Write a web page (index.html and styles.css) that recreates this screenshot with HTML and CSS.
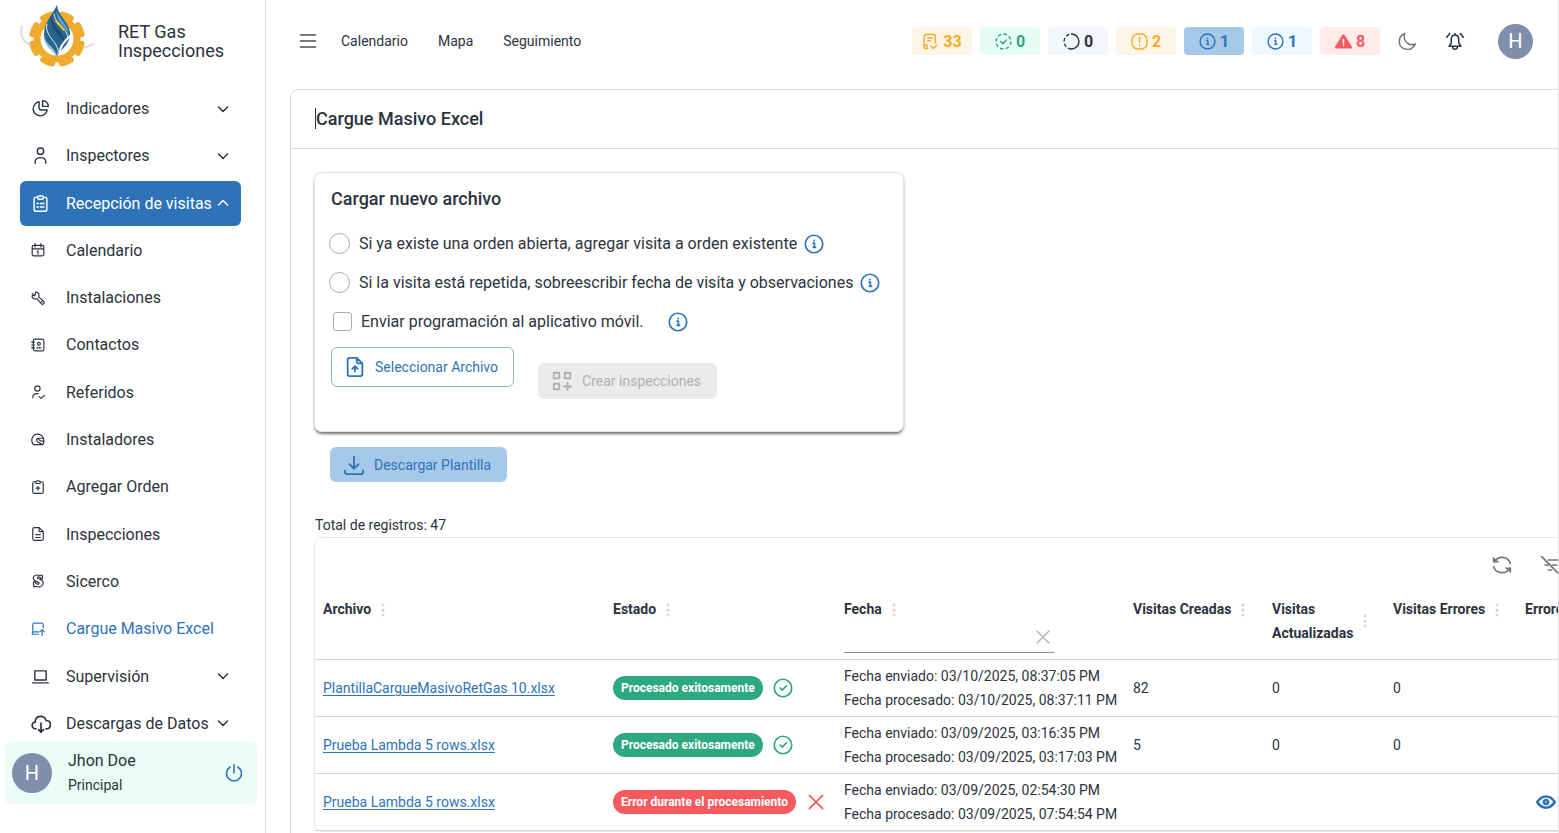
FILE: index.html
```html
<!DOCTYPE html>
<html lang="es">
<head>
    <meta charset="utf-8">
    <title>Cargue Masivo Excel</title>
    <link rel="stylesheet" href="styles.css">
</head>
<body>

    <!-- shared icons -->
    <svg class="sprite" aria-hidden="true">
        <symbol id="down" viewBox="0 0 24 24"><path d="M3 8l9 9 9-9"/></symbol>
        <symbol id="up" viewBox="0 0 24 24"><path d="M3 16l9-9 9 9"/></symbol>
        <symbol id="info" viewBox="0 0 24 24"><circle cx="12" cy="12" r="10.5"/><path d="M11 11h1.500v5M11 16h3M12 7.500v.5"/></symbol>
        <symbol id="check" viewBox="0 0 24 24"><circle cx="12" cy="12" r="10.500"/><path d="M8.500 12l2.500 2.500 5-5"/></symbol>
        <symbol id="dots" viewBox="0 0 6 16"><circle cx="3" cy="3" r="1.500"/><circle cx="3" cy="8" r="1.500"/><circle cx="3" cy="13" r="1.500"/></symbol>
        <symbol id="cross" viewBox="0 0 24 24"><path d="M4 4l16 16M20 4L4 20"/></symbol>
    </svg>

    <div class="app">
        <aside class="sidebar">
            <div class="brand">
                <svg class="logo" viewBox="0 0 76 72">
                    <path d="M2 24c-4 12 5 20 15 20M73 42c-4 3-8 4-14 4" fill="none" stroke="#dcdde4" stroke-width="2"/>
                    <circle cx="37" cy="37" r="20" fill="#fff" stroke="#efab2e" stroke-width="7"/>
                    <circle cx="37" cy="37" r="25" fill="none" stroke="#efab2e" stroke-width="6" pathLength="16" stroke-dasharray="1 1" stroke-dashoffset="-0.5"/>
                    <path d="M37 3C33 12 24 20 24 32c0 11 8 15 13 22 4-7 14-12 13-24C49 20 38 14 37 3z" fill="#28658c"/>
                    <path d="M37 3c-3 12 12 17 12 30-3-8-15-13-12-30z" fill="#5ba6c5"/>
                    <path d="M32 14c-1 10 12 16 13 27-4-8-17-15-13-27z" fill="#164870"/>
                    <path d="M34 12c0 9 14 14 14 25M27 22c-4 12 14 19 11 30" fill="none" stroke="#dceef5" stroke-width="1"/>
                    <path d="M24 31c0 12 11 13 13 23-5-6-15-11-13-23z" fill="#8fc5d8"/>
                    <path d="M50 34c-7 7-11 12-10 18" fill="none" stroke="#fff" stroke-width="2"/>
                    <path d="M36 19l8 9" stroke="#efc03c"/>
                </svg>
                <span>RET Gas<br>Inspecciones</span>
            </div>

            <nav class="menu">
                <a href="#"><svg class="icon" viewBox="0 0 24 24"><path d="M10 2.500A10 10 0 1 0 21.500 14H13a3 3 0 0 1-3-3zM15 1v8h8A8 8 0 0 0 15 1z"/></svg><span>Indicadores</span><svg class="arrow"><use href="#down"/></svg></a>
                <a href="#"><svg class="icon" viewBox="0 0 24 24"><circle cx="12" cy="6" r="4.500"/><path d="M4.500 23v-2c0-8 15-8 15 0v2"/></svg><span>Inspectores</span><svg class="arrow"><use href="#down"/></svg></a>
                <a href="#" class="active"><svg class="icon" viewBox="0 0 24 24"><path d="M8 3H6a3 3 0 0 0-3 3v14a3 3 0 0 0 3 3h12a3 3 0 0 0 3-3V6a3 3 0 0 0-3-3h-2M8 2l4-1 4 1v3l-2 1h-4L8 5zM7 12h2M12 12h5M7 17h2M12 17h5"/></svg><span>Recepción de visitas</span><svg class="arrow"><use href="#up"/></svg></a>
                <a href="#" class="sub"><svg class="icon" viewBox="0 0 24 24"><path d="M5 4h14a3 3 0 0 1 3 3v12a3 3 0 0 1-3 3H5a3 3 0 0 1-3-3V7a3 3 0 0 1 3-3zM7 1v6M17 1v6M2 10h20M11 14h1v5"/></svg><span>Calendario</span></a>
                <a href="#" class="sub"><svg class="icon" viewBox="0 0 24 24"><path d="M8 2L7 7l-5 1c-1 4 4 7 8 5l8 9c2 2 6-1 4-4l-9-8c2-4-1-9-5-8zM2 4l4 4M18 18l1 1"/></svg><span>Instalaciones</span></a>
                <a href="#" class="sub"><svg class="icon" viewBox="0 0 24 24"><path d="M7 2h12a3 3 0 0 1 3 3v14a3 3 0 0 1-3 3H7a3 3 0 0 1-3-3V5a3 3 0 0 1 3-3zM1 7h5M1 12h5M1 17h5M10 17h7"/><circle cx="13.500" cy="10" r="2.500"/></svg><span>Contactos</span></a>
                <a href="#" class="sub"><svg class="icon" viewBox="0 0 24 24"><circle cx="11" cy="6" r="4.500"/><path d="M3 22c0-6 4-8 10-7M14 20l3 3 6-5"/></svg><span>Referidos</span></a>
                <a href="#" class="sub"><svg class="icon" viewBox="0 0 24 24"><path d="M4 20h16c6-9-1-18-9-18S-2 12 4 20zM20 9h-7c-5 0-4 6 0 7l7 4M12 10l5 4h5"/></svg><span>Instaladores</span></a>
                <a href="#" class="sub"><svg class="icon" viewBox="0 0 24 24"><path d="M8 3H6a3 3 0 0 0-3 3v14a3 3 0 0 0 3 3h12a3 3 0 0 0 3-3V6a3 3 0 0 0-3-3h-2M8 3l4-2 4 2v2l-2 1h-4L8 5zM12 11v6M9 14h6"/></svg><span>Agregar Orden</span></a>
                <a href="#" class="sub"><svg class="icon" viewBox="0 0 24 24"><path d="M14 1H6a3 3 0 0 0-3 3v16a3 3 0 0 0 3 3h12a3 3 0 0 0 3-3V8zM14 1v7h7M8 13h8M8 18h8"/></svg><span>Inspecciones</span></a>
                <a href="#" class="sub"><svg class="icon" viewBox="0 0 24 24"><path d="M20 8l-1-6-3 1C9 0 3 3 4 8c1 6 11 5 10 8-1 3-6 1-7-2H4l1 8 3-1c6 3 13 0 13-6 0-7-11-6-10-9 1-2 5-1 6 2z"/></svg><span>Sicerco</span></a>
                <a href="#" class="sub current"><svg class="icon" viewBox="0 0 24 24"><path d="M3 17V4l2-2h14l2 2v6M3 17l-1 4h11M3 17h10M19 23v-9M15 17l4-4 4 4"/></svg><span>Cargue Masivo Excel</span></a>
                <a href="#"><svg class="icon" viewBox="0 0 24 24"><path d="M4 4h16v13H4zM1 21h22"/></svg><span>Supervisión</span><svg class="arrow"><use href="#down"/></svg></a>
                <a href="#"><svg class="icon large" viewBox="0 0 24 24"><path d="M6 19C0 19 0 11 5 11 5 2 17 2 18 9c7 0 7 10 0 10M12 12v11M9 20l3 3 3-3"/></svg><span>Descargas de Datos</span><svg class="arrow"><use href="#down"/></svg></a>
            </nav>

            <div class="user">
                <span class="avatar big">H</span>
                <div class="user-name">Jhon Doe<small>Principal</small></div>
                <button class="icon-btn power" aria-label="Salir"><svg viewBox="0 0 24 24"><path d="M12 1v11M7 4a10 10 0 1 0 10 0"/></svg></button>
            </div>
        </aside>

        <main class="main">
            <header class="topbar">
                <button class="icon-btn burger" aria-label="Menú"><svg viewBox="0 0 24 24"><path d="M2 4h20M2 12h20M2 20h20"/></svg></button>
                <a href="#">Calendario</a>
                <a href="#">Mapa</a>
                <a href="#">Seguimiento</a>

                <div class="chips">
                    <span class="chip orange"><svg viewBox="0 0 24 24"><path d="M8 22H5a2 2 0 0 1-2-2V5a3 3 0 0 1 3-3h10a3 3 0 0 1 3 3v9M3 17h4v5M8 7h7M8 11h4M13 19l3 3 5-5"/></svg>33</span>
                    <span class="chip green"><svg viewBox="0 0 24 24"><circle class="dashed" cx="12" cy="12" r="10.500" pathLength="32" stroke-dasharray="2.500 1.500"/><path d="M8 12l3 3 5-5"/></svg>0</span>
                    <span class="chip gray"><svg viewBox="0 0 24 24"><path d="M12 1.500a10.500 10.500 0 0 1 0 21"/><path class="dashed" d="M12 22.500a10.500 10.500 0 0 1 0-21" pathLength="16" stroke-dasharray="2.500 1.500"/></svg>0</span>
                    <span class="chip orange"><svg viewBox="0 0 24 24"><rect x="1.500" y="1.500" width="21" height="21" rx="8"/><path d="M12 6v7M12 17v.5"/></svg>2</span>
                    <span class="chip blue"><svg><use href="#info"/></svg>1</span>
                    <span class="chip sky"><svg><use href="#info"/></svg>1</span>
                    <span class="chip red"><svg viewBox="0 0 24 24"><path d="M12 4L2 20h20z" fill="#f65a5e" stroke="#f65a5e" stroke-width="4"/><path d="M12 9v5M12 17v.5" stroke="#fff"/></svg>8</span>
                </div>
                <button class="icon-btn moon" aria-label="Tema"><svg viewBox="0 0 24 24"><path d="M9 2C-1 6-1 21 11 23c5 1 10-2 12-7-9 4-17-5-14-14z"/></svg></button>
                <button class="icon-btn bell" aria-label="Notificaciones"><svg viewBox="0 0 24 24"><path d="M4 19h16l-3-4v-5c0-8-10-8-10 0v5zM9 20c0 4 6 4 6 0M12 4V2M1 7l4-5M23 7l-4-5"/></svg></button>
                <span class="avatar">H</span>
            </header>

            <section class="page-card">
                <h1><span class="caret">Cargue Masivo Excel</span></h1>

                <div class="page-body">
                    <form class="upload" onsubmit="return false;">
                        <h2>Cargar nuevo archivo</h2>
                        <div class="option">
                            <input type="radio" name="modo" id="agregar">
                            <label for="agregar">Si ya existe una orden abierta, agregar visita a orden existente</label>
                            <svg class="info"><use href="#info"/></svg>
                        </div>
                        <div class="option">
                            <input type="radio" name="modo" id="sobreescribir">
                            <label for="sobreescribir">Si la visita está repetida, sobreescribir fecha de visita y observaciones</label>
                            <svg class="info"><use href="#info"/></svg>
                        </div>
                        <div class="option">
                            <input type="checkbox" id="enviar">
                            <label for="enviar">Enviar programación al aplicativo móvil.</label>
                            <svg class="info far"><use href="#info"/></svg>
                        </div>
                        <div class="actions">
                            <button class="btn outline" type="button"><svg viewBox="0 0 24 24"><path d="M14 2H6a2 2 0 0 0-2 2v16a2 2 0 0 0 2 2h12a2 2 0 0 0 2-2V8zM14 2v4a2 2 0 0 0 2 2h4M12 17v-6M9 14l3-3 3 3"/></svg>Seleccionar Archivo</button>
                            <button class="btn" type="submit" disabled><svg viewBox="0 0 24 24"><path d="M3 3h6v6H3zM15 3h6v6h-6zM3 15h6v6H3zM18 14v8M14 18h8"/></svg>Crear inspecciones</button>
                        </div>
                    </form>

                    <button class="btn download"><svg viewBox="0 0 24 24"><path d="M12 3v13M7 11l5 5 5-5M2 18v1a3 3 0 0 0 3 3h14a3 3 0 0 0 3-3v-1"/></svg>Descargar Plantilla</button>

                    <p class="total">Total de registros: 47</p>

                    <div class="table-box">
                        <div class="toolbar">
                            <button class="icon-btn" aria-label="Recargar"><svg viewBox="0 0 24 24"><path d="M3 8A10.500 10.500 0 0 1 22 10M21 16A10.500 10.500 0 0 1 2 14"/><path d="M1 2v7h8zM23 22v-7h-8z" fill="#757575" stroke="none"/></svg></button>
                            <button class="icon-btn" aria-label="Ocultar filtros"><svg viewBox="0 0 24 24"><path d="M2 2l20 20M10 6h13M6 12h4M15 12h5M10 18h4"/></svg></button>
                        </div>
                        <table>
                            <colgroup>
                                <col class="c-file"><col class="c-state"><col class="c-date"><col class="c-created"><col class="c-updated"><col class="c-errors"><col class="c-view">
                            </colgroup>
                            <thead>
                                <tr>
                                    <th>Archivo<svg class="dots"><use href="#dots"/></svg></th>
                                    <th>Estado<svg class="dots"><use href="#dots"/></svg></th>
                                    <th>
                                        <label for="fecha">Fecha</label><svg class="dots"><use href="#dots"/></svg>
                                        <div class="filter">
                                            <input type="text" id="fecha">
                                            <button class="icon-btn" aria-label="Limpiar"><svg><use href="#cross"/></svg></button>
                                        </div>
                                    </th>
                                    <th>Visitas Creadas<svg class="dots"><use href="#dots"/></svg></th>
                                    <th><div class="two-lines"><span>Visitas<br>Actualizadas</span><svg class="dots"><use href="#dots"/></svg></div></th>
                                    <th>Visitas Errores<svg class="dots"><use href="#dots"/></svg></th>
                                    <th>Errores</th>
                                </tr>
                            </thead>
                            <tbody>
                                <tr>
                                    <td><a href="#">PlantillaCargueMasivoRetGas 10.xlsx</a></td>
                                    <td><div class="state"><span class="badge ok">Procesado exitosamente</span><svg class="ok-icon"><use href="#check"/></svg></div></td>
                                    <td>Fecha enviado: 03/10/2025, 08:37:05 PM<br>Fecha procesado: 03/10/2025, 08:37:11 PM</td>
                                    <td>82</td>
                                    <td>0</td>
                                    <td>0</td>
                                    <td></td>
                                </tr>
                                <tr>
                                    <td><a href="#">Prueba Lambda 5 rows.xlsx</a></td>
                                    <td><div class="state"><span class="badge ok">Procesado exitosamente</span><svg class="ok-icon"><use href="#check"/></svg></div></td>
                                    <td>Fecha enviado: 03/09/2025, 03:16:35 PM<br>Fecha procesado: 03/09/2025, 03:17:03 PM</td>
                                    <td>5</td>
                                    <td>0</td>
                                    <td>0</td>
                                    <td></td>
                                </tr>
                                <tr>
                                    <td><a href="#">Prueba Lambda 5 rows.xlsx</a></td>
                                    <td><div class="state"><span class="badge error">Error durante el procesamiento</span><svg class="error-icon"><use href="#cross"/></svg></div></td>
                                    <td>Fecha enviado: 03/09/2025, 02:54:30 PM<br>Fecha procesado: 03/09/2025, 07:54:54 PM</td>
                                    <td></td>
                                    <td></td>
                                    <td></td>
                                    <td><button class="icon-btn eye" aria-label="Ver errores"><svg viewBox="0 0 24 24"><path d="M1.500 12C7 3 17 3 22.500 12 17 21 7 21 1.500 12z"/><circle cx="12" cy="12" r="2.500"/></svg></button></td>
                                </tr>
                            </tbody>
                        </table>
                    </div>
                </div>
            </section>
        </main>
    </div>

</body>
</html>
```
FILE: styles.css
```css
* {
    box-sizing: border-box;
}

body {
    margin: 0;
    font-family: Roboto, "Liberation Sans", sans-serif;
    font-size: 16px;
    color: #2c333e;
    background-color: #fff;
}

a {
    color: inherit;
    text-decoration: none;
}

button {
    font-family: inherit;
    cursor: pointer;
}

svg {
    flex-shrink: 0;
    fill: none;
    stroke: currentColor;
    stroke-width: 2;
    stroke-linecap: round;
    stroke-linejoin: round;
}

.sprite {
    display: none;
}

.app {
    display: flex;
    height: 100vh;
    overflow: hidden;
}

/* sidebar */
.sidebar {
    width: 266px;
    flex-shrink: 0;
    display: flex;
    flex-direction: column;
    border-right: 1px solid #d9dbde;
    padding-bottom: 29px;
}

.brand {
    display: flex;
    align-items: center;
    gap: 22px;
    height: 86px;
    padding: 0 0 4px 20px;
    font-size: 18px;
    line-height: 19px;
}

.logo {
    width: 76px;
    height: 72px;
    margin-top: -6px;
    stroke: none;
}

.menu {
    flex: 1;
    display: flex;
    flex-direction: column;
    justify-content: space-between;
    padding: 0 24px 0 20px;
}

.menu a {
    display: flex;
    align-items: center;
    height: 45px;
    padding: 0 12px;
    border-radius: 6px;
    white-space: nowrap;
}

.menu span {
    flex: 1;
}

.menu .active {
    background-color: #2e73b9;
    color: #fff;
}

.menu .current {
    color: #2e73b9;
}

.icon {
    width: 17px;
    height: 17px;
    margin-right: 17px;
}

.icon.large {
    width: 20px;
    height: 20px;
    margin: 0 15px 0 -1px;
}

.sub .icon {
    width: 14px;
    height: 14px;
    margin: 0 21px 0 -1px;
}

.arrow {
    width: 12px;
    height: 12px;
    stroke-width: 3;
}

.user {
    display: flex;
    align-items: center;
    height: 62px;
    margin: -4px 8px 0 5px;
    padding: 0 14px 0 7px;
    border-radius: 6px;
    background-color: #ebfbf6;
    z-index: 1;
}

.user-name {
    flex: 1;
    margin-left: 16px;
    line-height: 24px;
}

.user-name small {
    display: block;
    font-size: 14px;
}

.avatar {
    display: flex;
    align-items: center;
    justify-content: center;
    width: 35px;
    height: 35px;
    border-radius: 50%;
    background-color: #7e8eab;
    color: #fff;
    font-size: 20px;
}

.avatar.big {
    width: 40px;
    height: 40px;
}

.icon-btn {
    display: flex;
    padding: 0;
    border: none;
    background: none;
    color: #757575;
}

.icon-btn svg {
    width: 18px;
    height: 18px;
}

.power {
    color: #2e73b9;
}

/* main area */
.main {
    flex: 1;
    min-width: 0;
    overflow: hidden;
    padding-left: 24px;
    border-right: 1px solid #e2e3e5;
}

.topbar {
    display: flex;
    align-items: center;
    gap: 30px;
    height: 89px;
    padding: 0 25px 7px 9px;
    font-size: 14px;
}

.burger {
    margin-right: -6px;
    color: #4b4f57;
}

.chips {
    display: flex;
    gap: 8px;
    margin-left: auto;
    margin-right: -12px;
}

.chip {
    display: flex;
    align-items: center;
    justify-content: center;
    gap: 4px;
    width: 60px;
    height: 28px;
    border-radius: 4px;
    font-size: 16px;
    font-weight: 700;
}

.chip svg {
    width: 17px;
    height: 17px;
}

.chip .dashed {
    stroke-linecap: butt;
}

.chip.orange {
    background-color: #fff5e6;
    color: #f6a92c;
}

.chip.green {
    background-color: #e6fdf6;
    color: #2ea881;
}

.chip.gray {
    background-color: #f3f6fa;
}

.chip.blue {
    background-color: #a7c9e9;
    color: #2e73b9;
}

.chip.sky {
    background-color: #edf9ff;
    color: #2e73b9;
}

.chip.red {
    background-color: #ffebea;
    color: #f65a5e;
}

.bell {
    margin-right: 4px;
    color: #2c333e;
}

.page-card {
    min-width: 1384px;
    min-height: 100vh;
    border: 1px solid #d9dbde;
    border-radius: 8px;
}

h1 {
    margin: 0;
    padding: 18px 24px 19px;
    border-bottom: 1px solid #d9dbde;
    font-size: 18px;
    line-height: 21px;
    font-weight: 500;
}

.caret {
    display: inline-block;
    border-left: 1px solid #2c333e;
}

.page-body {
    padding: 23px;
}

.upload {
    width: 590px;
    padding: 16px 16px 32px;
    border: 1px solid #dfe1e4;
    border-radius: 8px;
    box-shadow: 0 3px 3px -1px rgba(0, 0, 0, 0.5), 0 1px 3px rgba(0, 0, 0, 0.15);
}

h2 {
    margin: 0 0 15px;
    font-size: 18px;
    line-height: 20px;
    font-weight: 500;
}

.option {
    display: flex;
    align-items: center;
    height: 39px;
}

.option input {
    appearance: none;
    margin: 0 9px 0 -2px;
    width: 21px;
    height: 21px;
    border: 1px solid #a9abb8;
    border-radius: 50%;
    background-color: #fff;
}

.option input[type="checkbox"] {
    margin-left: 2px;
    width: 19px;
    height: 19px;
    border-radius: 3px;
}

.info {
    width: 20px;
    height: 20px;
    margin-left: 7px;
    color: #2e73b9;
}

.info.far {
    margin-left: 24px;
}

.actions {
    display: flex;
    gap: 24px;
    margin-top: 6px;
}

.btn {
    display: flex;
    align-items: center;
    gap: 9px;
    height: 35px;
    padding: 0 15px 0 12px;
    border: 1px solid transparent;
    border-radius: 6px;
    font-size: 14px;
    color: #2e73b9;
}

.btn svg {
    width: 22px;
    height: 22px;
}

.btn.outline {
    height: 40px;
    border-color: #8fb5dc;
    background-color: #fff;
}

.btn:disabled {
    height: 36px;
    margin-top: 16px;
    background-color: #ebebeb;
    color: #b0b0b0;
}

.download {
    margin: 15px 0 0 16px;
    background-color: #a7c9e9;
}

.total {
    margin: 31px 0 0 1px;
    font-size: 14px;
    line-height: 24px;
}

/* records table */
.table-box {
    border: 1px solid #e6e8ea;
    border-radius: 8px;
}

.toolbar {
    display: flex;
    align-items: center;
    justify-content: flex-end;
    gap: 28px;
    height: 59px;
    padding: 0 89px 5px 0;
}

.toolbar svg {
    width: 20px;
    height: 20px;
}

table {
    width: 100%;
    table-layout: fixed;
    border-collapse: collapse;
    font-size: 14px;
    line-height: 24px;
}

.c-file {
    width: 290px;
}

.c-state {
    width: 231px;
}

.c-date {
    width: 289px;
}

.c-created {
    width: 139px;
}

.c-updated {
    width: 121px;
}

.c-errors {
    width: 132px;
}

th, td {
    padding: 0 8px;
    text-align: left;
    border-bottom: 1px solid #d5d6d8;
    white-space: nowrap;
}

th {
    height: 62px;
    font-weight: 700;
    vertical-align: top;
}

td {
    height: 57px;
}

td a {
    color: #2e73b9;
    text-decoration: underline;
    text-decoration-thickness: 1px;
    text-underline-offset: 2px;
}

.dots {
    width: 6px;
    height: 16px;
    margin-left: 9px;
    vertical-align: middle;
    fill: #d3d5d9;
    stroke: none;
}

.two-lines {
    display: flex;
    align-items: center;
}

.filter {
    display: flex;
    align-items: center;
    width: 210px;
    height: 32px;
    border-bottom: 1px solid #8a8d93;
}

.filter input {
    flex: 1;
    min-width: 0;
    border: none;
    outline: none;
}

.filter button {
    margin-right: 2px;
    color: #b5b5b5;
}

.state {
    display: flex;
    align-items: center;
    gap: 10px;
}

.badge {
    padding: 0 8px;
    border-radius: 12px;
    color: #fff;
    font-size: 12px;
    font-weight: 700;
}

.badge.ok {
    background-color: #2ea881;
}

.badge.error {
    background-color: #f65a5e;
}

.state svg {
    width: 20px;
    height: 20px;
}

.ok-icon {
    color: #2ea881;
}

.error-icon {
    color: #f65a5e;
}

.eye {
    margin-left: 11px;
    color: #2e73b9;
}

.eye svg {
    width: 20px;
    height: 20px;
    stroke-width: 3;
}
```
